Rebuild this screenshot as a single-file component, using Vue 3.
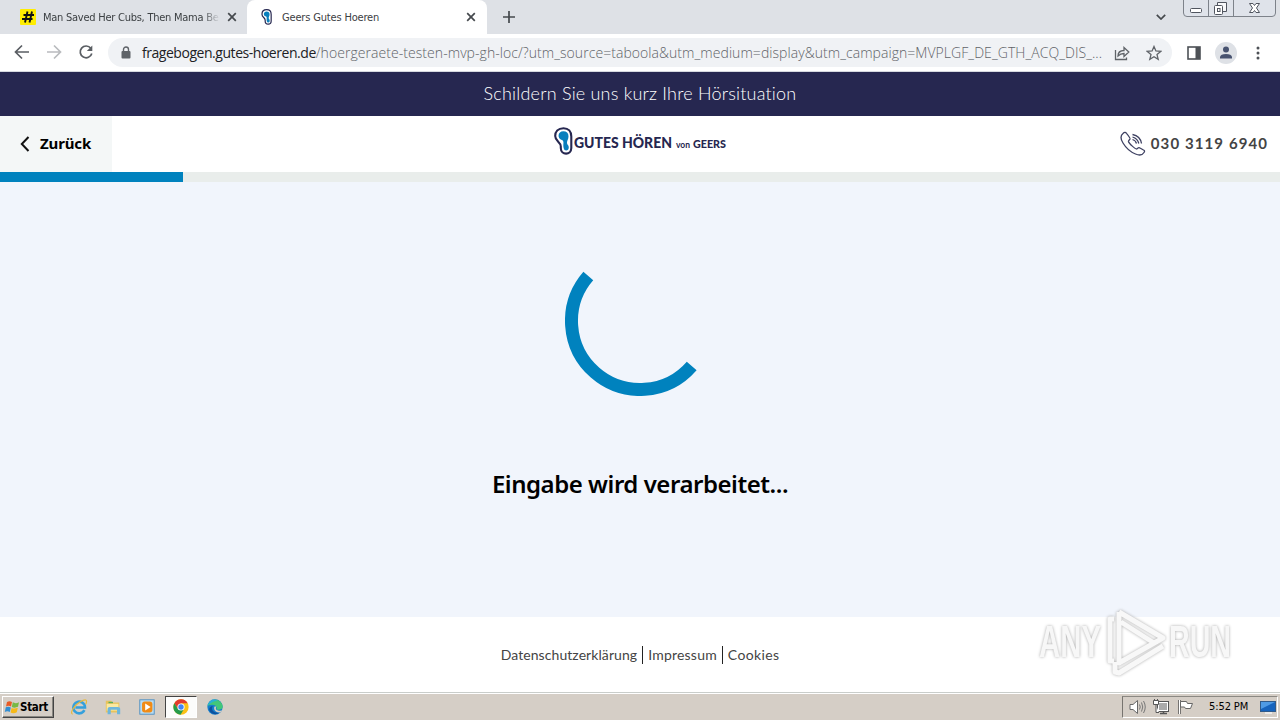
<script setup>
import { ref } from 'vue'

const progress = ref(14.3)

const footerLinks = [
  { label: 'Datenschutzerklärung', name: 'privacy' },
  { label: 'Impressum', name: 'imprint' },
  { label: 'Cookies', name: 'cookies' }
]
</script>

<template>
  <div class="screen">
    <div class="tab-strip">
      <div class="tab tab-first">
        <svg class="favicon" viewBox="0 0 16 16">
          <rect width="16" height="16" rx="1" fill="#ffed00" />
          <path d="M7.500 2.500 5 13.500M12 2.500 9.500 13.500M3.500 6H14M2 10H12.500" stroke="#111" stroke-width="1.9" />
        </svg>
        <span class="tab-title fade">Man Saved Her Cubs, Then Mama Be</span>
        <svg class="close" viewBox="0 0 10 10"><path d="M1.2 1.2 8.8 8.8M8.8 1.2 1.2 8.8" /></svg>
      </div>
      <div class="tab active">
        <svg class="favicon" viewBox="0 0 20 28">
          <path class="ear-line" d="M9.500 1.200C4 1.200 1.200 4.800 1.200 9C1.200 14.500 6.800 15 6.800 19.500V21C6.800 28.500 17.300 28.500 17.300 21V9.500C17.300 4.500 14.500 1.200 9.500 1.200Z" />
          <path class="ear-fill" d="M9.300 4.300C3.500 4.300 3.300 11.500 7.300 12.800C9.200 13.500 9.600 14.500 9.400 16.500C9.100 20 9.700 23.500 12.200 23.500C14.800 23.500 15.200 20.500 14.400 18.800C13.900 17.700 13 17.500 13 15.500C13 13.500 14.500 12.500 14.500 9.300C14.500 6 12.500 4.300 9.300 4.300Z" />
        </svg>
        <span class="tab-title geers">Geers Gutes Hoeren</span>
        <svg class="close" viewBox="0 0 10 10"><path d="M1.2 1.2 8.8 8.8M8.8 1.2 1.2 8.8" /></svg>
      </div>
      <svg class="new-tab" viewBox="0 0 12 12"><path d="M6 0V12M0 6H12" /></svg>
      <svg class="tab-search" viewBox="0 0 10 6"><path d="M.8.8 5 5 9.2.8" /></svg>
      <svg class="window-buttons" viewBox="0 0 94 17">
        <path d="M.5 0V13Q.5 16.500 4 16.500H89Q92.500 16.500 92.500 13V0M25.500 0V16.500M50.500 0V16.500" fill="#dfe3ea" stroke="#7d828a" />
        <rect x="7.500" y="8.500" width="11" height="4" rx="1" fill="#fff" stroke="#50555f" />
        <path d="M34.500 6V2.500H43.500V11.500H40" fill="#f7f8fa" stroke="#50555f" />
        <rect x="31.500" y="5.500" width="8" height="9" rx="1" fill="#fff" stroke="#50555f" />
        <rect x="34.500" y="8.500" width="2.500" height="3" fill="none" stroke="#50555f" />
        <path d="M66.500 3.500H70L71.500 5.500 73 3.500H76.500L73.500 8 76.500 12.500H73L71.500 10.500 70 12.500H66.500L69.500 8Z" fill="#fff" stroke="#50555f" />
      </svg>
    </div>

    <div class="toolbar">
      <svg class="nav back" viewBox="0 0 16 16"><path d="M15 8H2M8 1.500 1.500 8 8 14.500" /></svg>
      <svg class="nav forward" viewBox="0 0 16 16"><path d="M1 8H14M8 1.500 14.500 8 8 14.500" /></svg>
      <svg class="nav reload" viewBox="0 0 16 16">
        <path d="M12.800 4.300A5.900 5.900 0 1 0 13.800 9.500" />
        <path class="reload-head" d="M14.300 1.500V7H8.800Z" />
      </svg>
      <div class="omnibox">
        <svg class="lock" viewBox="0 0 10 13">
          <rect x=".5" y="5" width="9" height="7.500" rx="1" fill="#5f6368" />
          <path d="M2.500 5V3.500a2.500 2.500 0 0 1 5 0V5" fill="none" stroke="#5f6368" stroke-width="1.400" />
        </svg>
        <div class="url"><span class="host">fragebogen.gutes-hoeren.de</span><span class="path">/hoergeraete-testen-mvp-gh-loc/?utm_source=taboola&amp;utm_medium=display&amp;utm_campaign=MVPLGF_DE_GTH_ACQ_DIS_...</span></div>
        <svg class="share" viewBox="0 0 16 16">
          <path d="M1.500 5V14.500H12.500V12.500M4 11C4 7.500 6.500 5.500 10 5.500V2.500L14.800 7 10 11.500V8.500C7 8.500 5.500 9.500 4 11Z" />
        </svg>
        <svg class="star" viewBox="0 0 16 16">
          <path d="M8 1.500 9.900 6 14.700 6.400 11 9.600 12.200 14.300 8 11.800 3.800 14.300 5 9.600 1.300 6.400 6.100 6Z" />
        </svg>
      </div>
      <svg class="side-panel" viewBox="0 0 14 14">
        <rect x="1" y="1" width="12" height="12" fill="none" stroke="#4d5156" stroke-width="1.600" />
        <rect x="8.500" y="1" width="4.500" height="12" fill="#4d5156" />
      </svg>
      <svg class="avatar" viewBox="0 0 22 22">
        <circle cx="11" cy="11" r="11" fill="#dee1e6" />
        <circle cx="11" cy="7.500" r="3" fill="#485370" />
        <path d="M5 16.500V15Q5.500 12 11 12T17 15V16.500Z" fill="#485370" />
      </svg>
      <svg class="menu" viewBox="0 0 4 14">
        <circle cx="2" cy="2" r="1.500" /><circle cx="2" cy="7" r="1.500" /><circle cx="2" cy="12" r="1.500" />
      </svg>
    </div>

    <div class="banner"><span>Schildern Sie uns kurz Ihre Hörsituation</span></div>

    <header class="header">
      <button class="back-button">
        <svg viewBox="0 0 10 16"><path d="M8.500 1 1.800 8 8.500 15" /></svg>
        <span>Zurück</span>
      </button>
      <div class="logo">
        <svg class="ear" viewBox="0 0 20 28">
          <path class="ear-line" d="M9.500 1.200C4 1.200 1.200 4.800 1.200 9C1.200 14.500 6.800 15 6.800 19.500V21C6.800 28.500 17.300 28.500 17.300 21V9.500C17.300 4.500 14.500 1.200 9.500 1.200Z" />
          <path class="ear-fill" d="M9.300 4.300C3.500 4.300 3.300 11.500 7.300 12.800C9.200 13.500 9.600 14.500 9.400 16.500C9.100 20 9.700 23.500 12.200 23.500C14.800 23.500 15.200 20.500 14.400 18.800C13.900 17.700 13 17.500 13 15.500C13 13.500 14.500 12.500 14.500 9.300C14.500 6 12.500 4.300 9.300 4.300Z" />
        </svg>
        <svg class="wordmark" viewBox="0 0 154 28">
          <text class="brand" x="0" y="20.500" textLength="98" lengthAdjust="spacingAndGlyphs">GUTES HÖREN</text>
          <text class="von" x="102" y="20.800" textLength="14" lengthAdjust="spacingAndGlyphs">von</text>
          <text class="geers-mark" x="119" y="20.800" textLength="33" lengthAdjust="spacingAndGlyphs">GEERS</text>
        </svg>
      </div>
      <div class="phone">
        <svg viewBox="0 0 26 26">
          <path d="M3 2.500C.5 4.500.5 8 3 12C6 17 10.500 21 15.500 23C19 24.500 22.500 24 24 21.500C25 20 24.500 19.500 23.500 19L19.500 16.800C18.300 16.300 17.500 17.500 16.500 18C15.500 18.300 9 12.500 8.500 10.500C8.300 9.500 9.500 9 10 8C10.300 7 7.500 3.500 6.500 2.300C5.500 1 4.300 1.300 3 2.500Z" />
          <path d="M12.500 3.500C17.500 4.500 20.700 7.500 21.500 12.500M12.500 6C16 7 18 9 18.800 12.500M12.500 8.500C14.800 9.200 16 10.500 16.500 12.500" />
        </svg>
        <span>030 3119 6940</span>
      </div>
    </header>

    <div class="progress"><div class="bar" :style="{ width: progress + '%' }"></div></div>

    <main class="content">
      <svg class="spinner" viewBox="-75 -75 150 150">
        <circle r="68.500" pathLength="360" stroke-dasharray="180 180" transform="rotate(41)" />
      </svg>
      <h1>Eingabe wird verarbeitet...</h1>
    </main>

    <footer class="footer">
      <a v-for="link in footerLinks" :key="link.name" :class="link.name">{{ link.label }}</a>
    </footer>

    <div class="taskbar">
      <div class="start">
        <svg viewBox="0 0 16 14">
          <path d="M3 2Q5.500.3 8 2L7 6.500Q4.500 5 2 6.500Z" fill="#e95b25" />
          <path d="M8.800 2.300Q11.500 4 15 2.200L14 6.800Q10.500 8.400 7.800 6.900Z" fill="#77b943" />
          <path d="M1.800 7.300Q4.300 6 6.800 7.500L5.800 12Q3.300 10.400.8 12Z" fill="#328ed2" />
          <path d="M7.600 7.900Q10.500 9.200 13.800 7.700L12.800 12.200Q9.500 14 6.600 12.500Z" fill="#f6b918" />
        </svg>
        <span>Start</span>
      </div>
      <div class="launch">
        <svg viewBox="0 0 20 20">
          <path d="M16 13.500A6.500 6.500 0 1 1 16.700 10.500H6" fill="none" stroke="#35a0dc" stroke-width="2.800" />
          <path d="M3 18C-1 17 5 8 11 4.500S20 1 17.500 7" fill="none" stroke="#e8b93b" stroke-width="1.300" />
        </svg>
      </div>
      <div class="launch">
        <svg viewBox="0 0 20 20">
          <path d="M2 3H8L9.500 5H17V16H2Z" fill="#e8c35d" />
          <path d="M3 6.500H16V14H3Z" fill="#fae9a1" />
          <path d="M4 18V12Q4 10 6.500 10H15.500Q18 10 18 12V18H14.500V13H7.500V18Z" fill="#6db6dc" />
          <path d="M5 5H10" stroke="#5baf58" stroke-width="1.500" />
        </svg>
      </div>
      <div class="launch">
        <svg viewBox="0 0 20 20">
          <rect x="2" y="2" width="16" height="16" fill="#b8dcf2" stroke="#4c8dc1" />
          <rect x="4.500" y="4" width="11.500" height="12" rx="3" fill="#f08b16" />
          <path d="M8 6 14 10 8 14Z" fill="#fff" />
        </svg>
      </div>
      <div class="launch pressed">
        <svg viewBox="0 0 20 20">
          <circle cx="10" cy="10" r="8.500" fill="#fbc116" />
          <path d="M2.600 5.800A8.500 8.500 0 0 1 17.400 5.800H10L6.500 12Z" fill="#e33b2e" />
          <path d="M2.600 5.800A8.500 8.500 0 0 0 9.500 18.500L13.500 12H6.500Z" fill="#259b4b" />
          <circle cx="10" cy="10" r="4" fill="#fff" /><circle cx="10" cy="10" r="3" fill="#4285f4" />
        </svg>
      </div>
      <div class="launch">
        <svg viewBox="0 0 20 20">
          <circle cx="10" cy="10" r="8.500" fill="#147dcc" />
          <path d="M1.700 8.500C4 .5 15.500-1 18.500 8.500C19.500 13 14 14 11.500 12.500C13.500 9 9 5.500 1.700 8.500Z" fill="#42c779" />
          <path d="M1.700 8.500C4 .5 10 .5 13 3.500C9 3 6 5 1.700 8.500Z" fill="#29afd5" />
          <path d="M7.500 9C5 13 9 18 15.500 15.800C11 20 4 17.500 3.500 12.500C3.500 10.500 5.500 9 7.500 9Z" fill="#0c519f" />
          <path d="M11.500 9.500C9.500 13.500 13 15 17.800 13.500L16 16C10 17 8 12 9.500 9.500Z" fill="#d5cec4" />
        </svg>
      </div>
      <div class="tray">
        <svg class="speaker" viewBox="0 0 18 16">
          <path d="M1 5.500H4L8.500 1.500V14.500L4 10.500H1Z" fill="#fff" stroke="#686868" />
          <path d="M10.500 5.500Q12 8 10.500 10.500M12.500 3.500Q15 8 12.500 12.500M14.500 2Q18 8 14.500 14" fill="none" stroke="#777" />
        </svg>
        <svg class="network" viewBox="0 0 18 16">
          <rect x="5.500" y="3.500" width="9" height="8" fill="#aaa" stroke="#fff" />
          <rect x="4.500" y="2.500" width="11" height="10" fill="none" stroke="#555" />
          <path d="M7 14.500H14M10.500 12V15" stroke="#555" stroke-width="1.500" />
          <path d="M.5 1.500H5.500V5.500H.5ZM1.500 0V2M4.500 0V2M3 6V13.500H6" fill="#fff" stroke="#555" />
        </svg>
        <svg class="flag" viewBox="0 0 18 16">
          <path d="M2.500 1V15" stroke="#555" stroke-width="2.500" />
          <path d="M3.500 2.500H9.500L10.500 4.500H15.500L13.500 9.500H8.500L7.500 8H3.500Z" fill="#fff" stroke="#666" />
          <path d="M2.500 1V15" stroke="#fff" />
        </svg>
        <span class="clock">5:52 PM</span>
        <svg class="desktop" viewBox="0 0 16 14">
          <rect x=".5" y="1.500" width="15" height="10" fill="#1764bd" stroke="#315b8a" />
          <path d="M1 2H15L1 9Z" fill="#4f9be5" />
          <path d="M5 13H12" stroke="#f3f3f3" stroke-width="1.500" />
        </svg>
      </div>
    </div>

    <svg class="watermark" viewBox="0 0 220 72">
      <text class="word" x="4" y="51" textLength="62" lengthAdjust="spacingAndGlyphs">ANY</text>
      <path class="mark" d="M79 13H75V55H79M84 6 128 32 84 57V6M86 16 119 37M80 56V66L84 67 128 40" />
      <text class="word" x="134" y="51" textLength="62" lengthAdjust="spacingAndGlyphs">RUN</text>
    </svg>
  </div>
</template>

<style>
body {
  margin: 0;
  overflow: hidden;
}
</style>

<style scoped>
.screen {
  position: relative;
  width: 1280px;
  height: 720px;
  display: flex;
  flex-direction: column;
  overflow: hidden;
  background: #fff;
  font-family: 'Open Sans', 'Noto Sans', sans-serif;
}

svg {
  display: block;
  flex: none;
}

span,
h1,
a {
  white-space: nowrap;
}

.tab-strip {
  height: 34px;
  flex: none;
  display: flex;
  background: #dee1e6;
}

.tab {
  box-sizing: border-box;
  height: 34px;
  display: flex;
  align-items: center;
  padding: 0 11px 0 12px;
  width: 240px;
}

.tab-first {
  width: 247px;
  padding-left: 20px;
  padding-right: 10px;
}

.tab.active {
  background: #fff;
  border-radius: 8px 8px 0 0;
}

.favicon {
  width: 16px;
  height: 16px;
  margin-right: 7px;
}

.tab-title {
  font-family: 'DejaVu Sans Condensed', 'DejaVu Sans', sans-serif;
  font-stretch: condensed;
  font-size: 11px;
  letter-spacing: -.17px;
  color: #3c4043;
  flex: 1;
}

.fade {
  margin-right: 7px;
  letter-spacing: -.25px;
  mask-image: linear-gradient(to right, #000 90%, transparent);
}

.close {
  width: 10px;
  height: 10px;
}

.close path,
.new-tab path,
.tab-search path {
  fill: none;
  stroke: #45494d;
  stroke-width: 1.7;
}

.new-tab {
  width: 12px;
  height: 12px;
  margin: 11px 0 0 16px;
}

.tab-search {
  width: 10px;
  height: 6px;
  margin: 14px 17px 0 auto;
}

.window-buttons {
  width: 94px;
  height: 17px;
  margin-right: 3px;
}

.toolbar {
  box-sizing: border-box;
  height: 38px;
  flex: none;
  display: flex;
  align-items: center;
  padding-left: 14px;
  border-bottom: 1px solid #d5d8df;
}

.nav {
  width: 16px;
  height: 16px;
  margin: -1px 16px 0 0;
}

.nav path {
  fill: none;
  stroke: #5a5e63;
  stroke-width: 1.7;
}

.nav.forward path {
  stroke: #b9bbbe;
}

.nav.reload {
  margin-right: 14px;
}

.nav .reload-head {
  fill: #5a5e63;
  stroke: none;
}

.omnibox {
  box-sizing: border-box;
  width: 1064px;
  height: 29px;
  padding: 0 10px 0 13px;
  border-radius: 15px;
  background: #f0f2f5;
  display: flex;
  align-items: center;
}

.lock {
  width: 10px;
  height: 13px;
  margin-right: 11px;
}

.url {
  width: 962px;
  margin-right: 11px;
  font-weight: 300;
  font-size: 14px;
}

.host {
  color: #202124;
  font-weight: 400;
  letter-spacing: -.46px;
}

.path {
  color: #5f6368;
  letter-spacing: .055px;
}

.share,
.star {
  width: 16px;
  height: 16px;
}

.star {
  margin-left: 16px;
}

.share path,
.star path {
  fill: none;
  stroke: #5f6368;
  stroke-width: 1.3;
}

.side-panel {
  width: 14px;
  height: 14px;
  margin-left: 15px;
}

.avatar {
  width: 22px;
  height: 22px;
  margin-left: 14px;
}

.menu {
  width: 4px;
  height: 14px;
  margin-left: 19px;
  fill: #4d5156;
}

.banner {
  box-sizing: border-box;
  height: 44px;
  flex: none;
  display: flex;
  align-items: center;
  justify-content: center;
  padding-bottom: 2px;
  background: #262750;
  color: #fff;
  font-family: Lato, sans-serif;
  font-weight: 300;
  font-size: 18px;
  letter-spacing: .2px;
}

.header {
  height: 56px;
  flex: none;
  display: flex;
  align-items: center;
}

.back-button {
  box-sizing: border-box;
  width: 112px;
  height: 56px;
  padding: 0 0 0 20px;
  border: 0;
  background: #f4f7f7;
  display: flex;
  align-items: center;
  gap: 10px;
  color: #000;
  font: 700 15px 'Noto Sans', sans-serif;
  letter-spacing: -.15px;
}

.back-button svg {
  width: 10px;
  height: 16px;
}

.back-button span {
  margin-top: -2px;
}

.back-button path {
  fill: none;
  stroke: #111;
  stroke-width: 2;
}

.logo {
  margin-left: 442px;
  display: flex;
  align-items: center;
  height: 28px;
  margin-top: -6px;
}

.ear {
  width: 20px;
  height: 28px;
}

.ear-line {
  fill: #fff;
  stroke: #262750;
  stroke-width: 2.1;
}

.ear-fill {
  fill: #087fbd;
}

.wordmark {
  width: 154px;
  height: 28px;
  fill: #262750;
}

.brand {
  font: 900 14.5px Lato, sans-serif;
}

.von {
  font: 700 9px Lato, sans-serif;
}

.geers-mark {
  font: 900 10.5px Lato, sans-serif;
}

.phone {
  margin: 0 13px 0 auto;
  display: flex;
  align-items: center;
  gap: 5px;
  font: 700 15px Lato, sans-serif;
  letter-spacing: 1.1px;
  color: #444;
}

.phone span {
  margin: -2px -1.1px 0 0;
}

.phone svg {
  width: 26px;
  height: 26px;
}

.phone path {
  fill: none;
  stroke: #3d4061;
  stroke-width: 1.3;
}

.progress {
  height: 10px;
  flex: none;
  background: #e9edeb;
}

.bar {
  height: 10px;
  background: #0082be;
}

.content {
  height: 435px;
  flex: none;
  display: flex;
  flex-direction: column;
  align-items: center;
  background: #f1f5fc;
}

.spinner {
  width: 150px;
  height: 150px;
  margin-top: 64px;
}

.spinner circle {
  fill: none;
  stroke: #0082be;
  stroke-width: 13;
}

h1 {
  margin: 71px 0 0;
  font: 600 24px/34px 'Noto Sans', sans-serif;
  letter-spacing: -.46px;
  color: #000;
}

.footer {
  height: 75px;
  flex: none;
  display: flex;
  align-items: center;
  justify-content: center;
  font: 400 14px/18px Lato, sans-serif;
  color: #444;
  letter-spacing: .2px;
}

.footer .privacy {
  letter-spacing: .08px;
}

.footer .cookies {
  letter-spacing: .35px;
}

.footer a + a {
  margin-left: 5px;
  padding-left: 5px;
  border-left: 1px solid #222;
}

.taskbar {
  box-sizing: border-box;
  height: 28px;
  flex: none;
  display: flex;
  align-items: center;
  padding: 1px 2px 1px;
  border-top: 1px solid #c9cdca;
  box-shadow: inset 0 1px #fff;
  background: #d5cec6;
}

.start {
  box-sizing: border-box;
  width: 52px;
  height: 22px;
  padding-left: 1px;
  margin-right: 8px;
  display: flex;
  align-items: center;
  border: 1px solid;
  border-color: #fff #444 #444 #fff;
  box-shadow: inset -1px -1px #898781;
  font: 700 11.5px 'DejaVu Sans Condensed', 'DejaVu Sans', sans-serif;
  letter-spacing: -.3px;
}

.start svg {
  width: 16px;
  height: 14px;
}

.launch {
  box-sizing: border-box;
  width: 34px;
  height: 22px;
  display: flex;
  align-items: center;
  justify-content: center;
}

.launch svg {
  width: 18px;
  height: 18px;
}

.launch.pressed {
  width: 32px;
  margin: 0 1px;
  border: 1px solid;
  border-color: #444 #fff #fff #444;
  background: #fcfcfb;
}

.tray {
  box-sizing: border-box;
  width: 156px;
  height: 22px;
  margin-left: auto;
  padding-left: 6px;
  display: flex;
  align-items: center;
  border: 1px solid;
  border-color: #8b8882 #fff #fff #77746f;
}

.tray .speaker,
.tray .network,
.tray .flag {
  width: 18px;
  height: 16px;
  margin-right: 6px;
}

.clock {
  margin-left: 8px;
  width: 46px;
  font: 11px 'DejaVu Sans Condensed', 'DejaVu Sans', sans-serif;
  letter-spacing: -.1px;
}

.desktop {
  width: 16px;
  height: 14px;
  margin-left: 5px;
}

.watermark {
  position: absolute;
  left: 1035px;
  top: 606px;
  width: 220px;
  height: 72px;
}

.word {
  font: 700 44px 'Liberation Sans', sans-serif;
  fill: #f7f7f7;
  filter: drop-shadow(0 0 1.5px #aaa);
}

.mark {
  fill: none;
  stroke: #f8f8f8;
  stroke-width: 5;
  stroke-linejoin: round;
  filter: drop-shadow(0 0 1.5px #aaa);
}
</style>
